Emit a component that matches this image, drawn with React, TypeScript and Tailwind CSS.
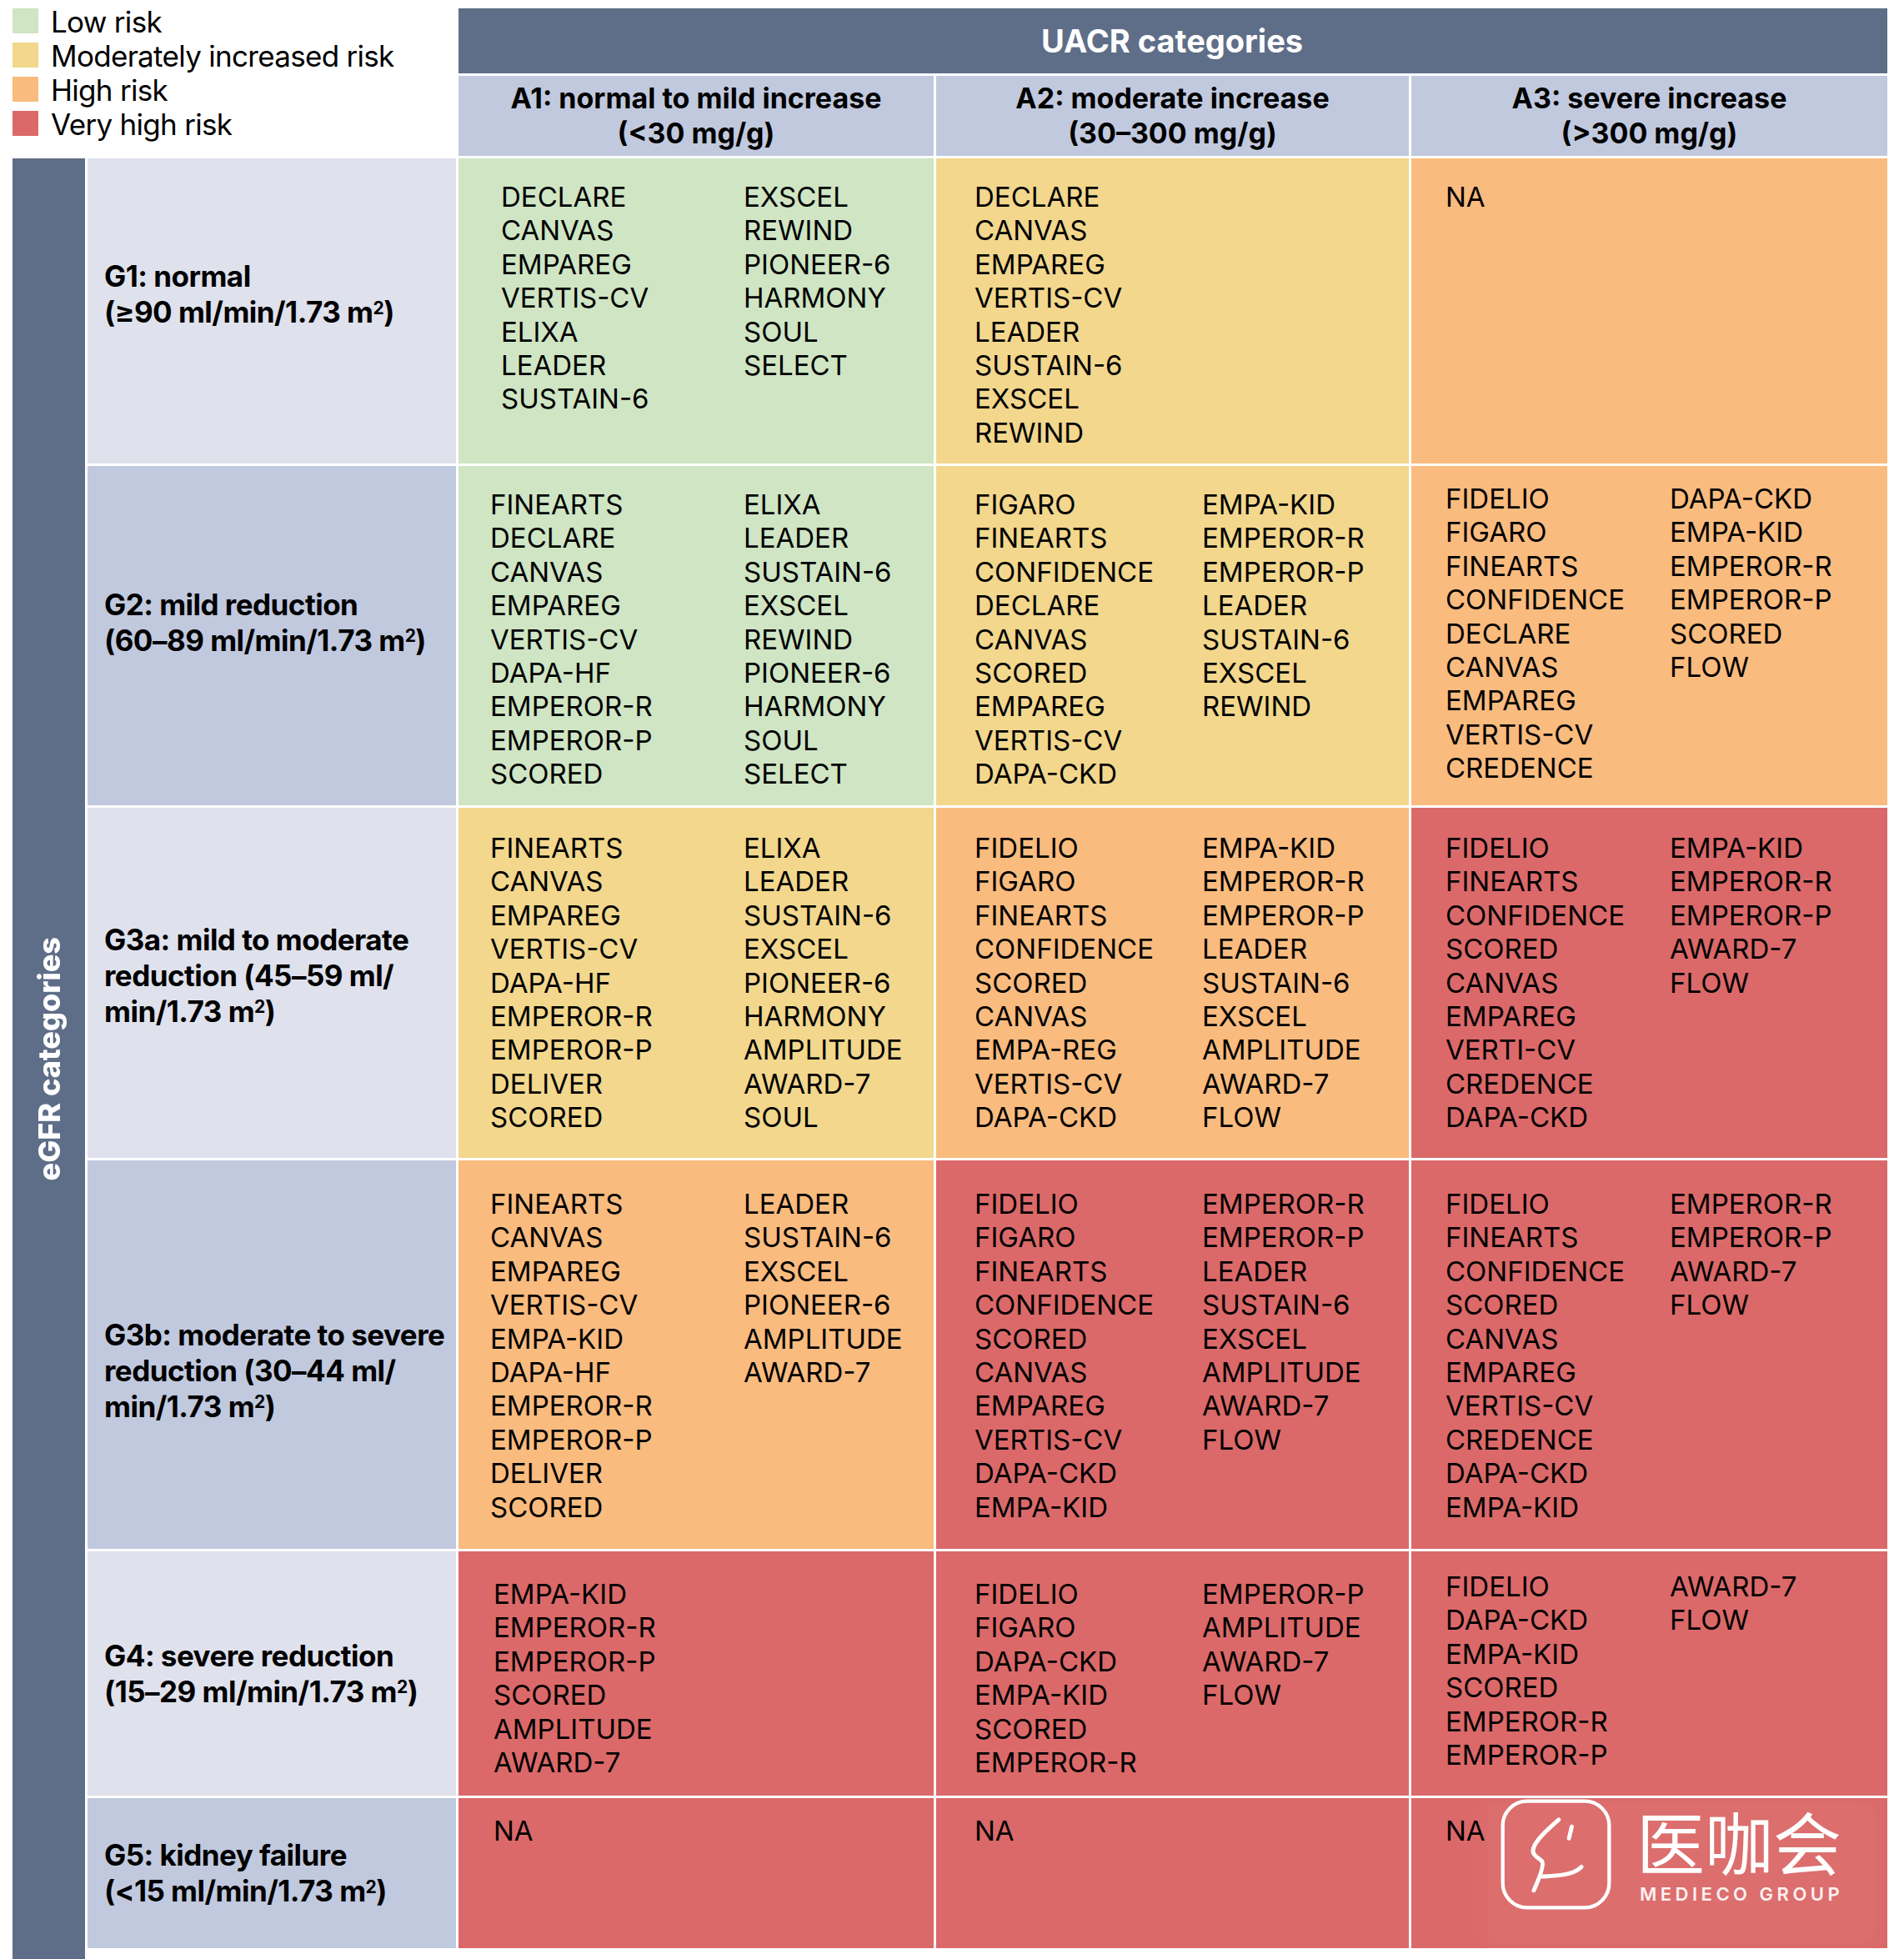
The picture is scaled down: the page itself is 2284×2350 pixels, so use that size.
import React from "react";

type Cell = { bg: string; cols: string[][]; pt?: string; pl?: string; w?: string };
type Row = { label: React.ReactNode; labelBg: string; shift: string; pt: string; cells: Cell[] };

const GREEN = "bg-[#cfe5c4]";
const YELLOW = "bg-[#f2d78d]";
const ORANGE = "bg-[#f9bb7e]";
const RED = "bg-[#db6969]";

const m2 = (
  <>
    m<sup className="text-[0.6em]">2</sup>
  </>
);

const rows: Row[] = [
  {
    label: (
      <>
        G1: normal
        <br />
        (≥90 ml/min/1.73 {m2})
      </>
    ),
    labelBg: "bg-[#dfe1ec]",
    shift: "pb-[40px]",
    pt: "pt-[26px]",
    cells: [
      {
        bg: GREEN,
        pl: "pl-[51px]",
        w: "w-[291px]",
        cols: [
          ["DECLARE", "CANVAS", "EMPAREG", "VERTIS-CV", "ELIXA", "LEADER", "SUSTAIN-6"],
          ["EXSCEL", "REWIND", "PIONEER-6", "HARMONY", "SOUL", "SELECT"],
        ],
      },
      {
        bg: YELLOW,
        cols: [["DECLARE", "CANVAS", "EMPAREG", "VERTIS-CV", "LEADER", "SUSTAIN-6", "EXSCEL", "REWIND"]],
      },
      { bg: ORANGE, cols: [["NA"]] },
    ],
  },
  {
    label: (
      <>
        G2: mild reduction
        <br />
        (60–89 ml/min/1.73 {m2})
      </>
    ),
    labelBg: "bg-[#c1c9de]",
    shift: "pb-[32px]",
    pt: "pt-[26px]",
    cells: [
      {
        bg: GREEN,
        cols: [
          ["FINEARTS", "DECLARE", "CANVAS", "EMPAREG", "VERTIS-CV", "DAPA-HF", "EMPEROR-R", "EMPEROR-P", "SCORED"],
          ["ELIXA", "LEADER", "SUSTAIN-6", "EXSCEL", "REWIND", "PIONEER-6", "HARMONY", "SOUL", "SELECT"],
        ],
      },
      {
        bg: YELLOW,
        cols: [
          ["FIGARO", "FINEARTS", "CONFIDENCE", "DECLARE", "CANVAS", "SCORED", "EMPAREG", "VERTIS-CV", "DAPA-CKD"],
          ["EMPA-KID", "EMPEROR-R", "EMPEROR-P", "LEADER", "SUSTAIN-6", "EXSCEL", "REWIND"],
        ],
      },
      {
        bg: ORANGE,
        pt: "pt-[19px]",
        cols: [
          ["FIDELIO", "FIGARO", "FINEARTS", "CONFIDENCE", "DECLARE", "CANVAS", "EMPAREG", "VERTIS-CV", "CREDENCE"],
          ["DAPA-CKD", "EMPA-KID", "EMPEROR-R", "EMPEROR-P", "SCORED", "FLOW"],
        ],
      },
    ],
  },
  {
    label: (
      <>
        G3a: mild to moderate
        <br />
        reduction (45–59 ml/
        <br />
        min/1.73 {m2})
      </>
    ),
    labelBg: "bg-[#dfe1ec]",
    shift: "pb-[18px]",
    pt: "pt-[28px]",
    cells: [
      {
        bg: YELLOW,
        cols: [
          ["FINEARTS", "CANVAS", "EMPAREG", "VERTIS-CV", "DAPA-HF", "EMPEROR-R", "EMPEROR-P", "DELIVER", "SCORED"],
          ["ELIXA", "LEADER", "SUSTAIN-6", "EXSCEL", "PIONEER-6", "HARMONY", "AMPLITUDE", "AWARD-7", "SOUL"],
        ],
      },
      {
        bg: ORANGE,
        cols: [
          ["FIDELIO", "FIGARO", "FINEARTS", "CONFIDENCE", "SCORED", "CANVAS", "EMPA-REG", "VERTIS-CV", "DAPA-CKD"],
          ["EMPA-KID", "EMPEROR-R", "EMPEROR-P", "LEADER", "SUSTAIN-6", "EXSCEL", "AMPLITUDE", "AWARD-7", "FLOW"],
        ],
      },
      {
        bg: RED,
        cols: [
          ["FIDELIO", "FINEARTS", "CONFIDENCE", "SCORED", "CANVAS", "EMPAREG", "VERTI-CV", "CREDENCE", "DAPA-CKD"],
          ["EMPA-KID", "EMPEROR-R", "EMPEROR-P", "AWARD-7", "FLOW"],
        ],
      },
    ],
  },
  {
    label: (
      <>
        G3b: moderate to severe
        <br />
        reduction (30–44 ml/
        <br />
        min/1.73 {m2})
      </>
    ),
    labelBg: "bg-[#c1c9de]",
    shift: "pt-[38px]",
    pt: "pt-[32px]",
    cells: [
      {
        bg: ORANGE,
        cols: [
          ["FINEARTS", "CANVAS", "EMPAREG", "VERTIS-CV", "EMPA-KID", "DAPA-HF", "EMPEROR-R", "EMPEROR-P", "DELIVER", "SCORED"],
          ["LEADER", "SUSTAIN-6", "EXSCEL", "PIONEER-6", "AMPLITUDE", "AWARD-7"],
        ],
      },
      {
        bg: RED,
        cols: [
          ["FIDELIO", "FIGARO", "FINEARTS", "CONFIDENCE", "SCORED", "CANVAS", "EMPAREG", "VERTIS-CV", "DAPA-CKD", "EMPA-KID"],
          ["EMPEROR-R", "EMPEROR-P", "LEADER", "SUSTAIN-6", "EXSCEL", "AMPLITUDE", "AWARD-7", "FLOW"],
        ],
      },
      {
        bg: RED,
        cols: [
          ["FIDELIO", "FINEARTS", "CONFIDENCE", "SCORED", "CANVAS", "EMPAREG", "VERTIS-CV", "CREDENCE", "DAPA-CKD", "EMPA-KID"],
          ["EMPEROR-R", "EMPEROR-P", "AWARD-7", "FLOW"],
        ],
      },
    ],
  },
  {
    label: (
      <>
        G4: severe reduction
        <br />
        (15–29 ml/min/1.73 {m2})
      </>
    ),
    labelBg: "bg-[#dfe1ec]",
    shift: "",
    pt: "pt-[31px]",
    cells: [
      { bg: RED, pl: "pl-[42px]", cols: [["EMPA-KID", "EMPEROR-R", "EMPEROR-P", "SCORED", "AMPLITUDE", "AWARD-7"]] },
      {
        bg: RED,
        cols: [
          ["FIDELIO", "FIGARO", "DAPA-CKD", "EMPA-KID", "SCORED", "EMPEROR-R"],
          ["EMPEROR-P", "AMPLITUDE", "AWARD-7", "FLOW"],
        ],
      },
      {
        bg: RED,
        pt: "pt-[22px]",
        cols: [
          ["FIDELIO", "DAPA-CKD", "EMPA-KID", "SCORED", "EMPEROR-R", "EMPEROR-P"],
          ["AWARD-7", "FLOW"],
        ],
      },
    ],
  },
  {
    label: (
      <>
        G5: kidney failure
        <br />
        (&lt;15 ml/min/1.73 {m2})
      </>
    ),
    labelBg: "bg-[#c1c9de]",
    shift: "",
    pt: "pt-[19px]",
    cells: [
      { bg: RED, pl: "pl-[42px]", cols: [["NA"]] },
      { bg: RED, cols: [["NA"]] },
      { bg: RED, cols: [["NA"]] },
    ],
  },
];

// per UACR column: left padding and width of the first list
const colPad = ["pl-[38px]", "pl-[46px]", "pl-[41px]"];
const colFirst = ["w-[304px]", "w-[273px]", "w-[269px]"];

const legend = [
  { color: "bg-[#cfe5c4]", text: "Low risk" },
  { color: "bg-[#f2d78d]", text: "Moderately increased risk" },
  { color: "bg-[#f9bb7e]", text: "High risk" },
  { color: "bg-[#db6969]", text: "Very high risk" },
];

const headers = [
  ["A1: normal to mild increase", "(<30 mg/g)"],
  ["A2: moderate increase", "(30–300 mg/g)"],
  ["A3: severe increase", "(>300 mg/g)"],
];

function Logo() {
  return (
    <div className="pointer-events-none absolute left-[88px] top-0 h-[178px] w-[470px]">
      <div className="absolute inset-0 rounded-xl bg-white/[0.04] blur-sm"></div>
      <svg viewBox="0 0 400 400" className="absolute left-[19px] top-[1px] h-[133px] w-[133px]" fill="none" stroke="white" strokeLinecap="round" strokeLinejoin="round">
        <rect x="8" y="8" width="384" height="384" rx="88" strokeWidth="13" />
        <path d="M210 75 C170 110 125 150 118 180 C112 205 140 213 150 225 C158 240 138 290 120 330" strokeWidth="15" />
        <path d="M150 280 C205 276 262 276 292 245" strokeWidth="15" />
        <path d="M257 100 L247 142" strokeWidth="15" />
      </svg>
      <div className="absolute left-[182px] top-[10px] text-[82px] leading-none text-white [font-family:'Noto_Sans_CJK_SC',sans-serif]">
        医咖会
      </div>
      <div className="absolute left-[186px] top-[104px] text-[22px] font-semibold leading-none tracking-[4.5px] text-white/90">
        MEDIECO GROUP
      </div>
    </div>
  );
}

export default function App() {
  return (
    <div className="min-h-[2350px] w-[2284px] bg-white text-black [font-family:Inter,'Liberation_Sans',sans-serif]">
      <div className="grid grid-cols-[87px_442px_570px_567px_571px] grid-rows-[78px_96px_366px_407px_420px_466px_293px_180px] gap-[3px] pl-[15px] pt-[10px]">
        {/* legend */}
        <div className="col-span-2 row-span-2 flex flex-col gap-[11px]">
          {legend.map((l) => (
            <div key={l.text} className="flex h-[30px] items-center gap-[15px]">
              <div className={`h-[30px] w-[31px] ${l.color}`}></div>
              <span className="relative top-[1px] text-[35px] leading-[30px] tracking-[-0.02em]">{l.text}</span>
            </div>
          ))}
        </div>

        {/* UACR header */}
        <div className="col-span-3 col-start-3 row-start-1 flex items-center justify-center bg-[#5f6e88] pr-[2px] text-[38px] font-bold text-white">
          UACR categories
        </div>
        {headers.map((h, i) => (
          <div
            key={h[0]}
            className={`row-start-2 flex flex-col items-center justify-center bg-[#c1c9de] text-[34px] font-bold leading-[42px] ${
              i === 0 ? "col-start-3" : i === 1 ? "col-start-4" : "col-start-5"
            }`}
          >
            <span>{h[0]}</span>
            <span>{h[1]}</span>
          </div>
        ))}

        {/* eGFR bar */}
        <div className="col-start-1 row-span-6 row-start-3 -mb-[13px] flex items-center justify-center bg-[#5f6e88]">
          <span className="rotate-180 text-[36px] font-extrabold text-white [writing-mode:vertical-rl]">
            eGFR categories
          </span>
        </div>

        {rows.map((r, ri) => (
          <React.Fragment key={ri}>
            <div className={`col-start-2 flex items-center pl-[20px] ${r.labelBg} ${r.shift}`}>
              <div className="whitespace-nowrap text-[35px] font-bold leading-[43px] tracking-[-0.015em]">{r.label}</div>
            </div>
            {r.cells.map((c, ci) => (
              <div key={ci} className={`relative flex items-start text-[33px] leading-[40.4px] ${c.bg} ${c.pl ?? colPad[ci]} ${c.pt ?? r.pt}`}>
                {c.cols.map((list, li) => (
                  <div key={li} className={`flex shrink-0 flex-col items-start ${li === 0 ? c.w ?? colFirst[ci] : ""}`}>
                    {list.map((t, ti) => (
                      <span key={ti} className="whitespace-nowrap">
                        {t}
                      </span>
                    ))}
                  </div>
                ))}
                {ri === 5 && ci === 2 ? <Logo /> : null}
              </div>
            ))}
          </React.Fragment>
        ))}
      </div>
    </div>
  );
}
